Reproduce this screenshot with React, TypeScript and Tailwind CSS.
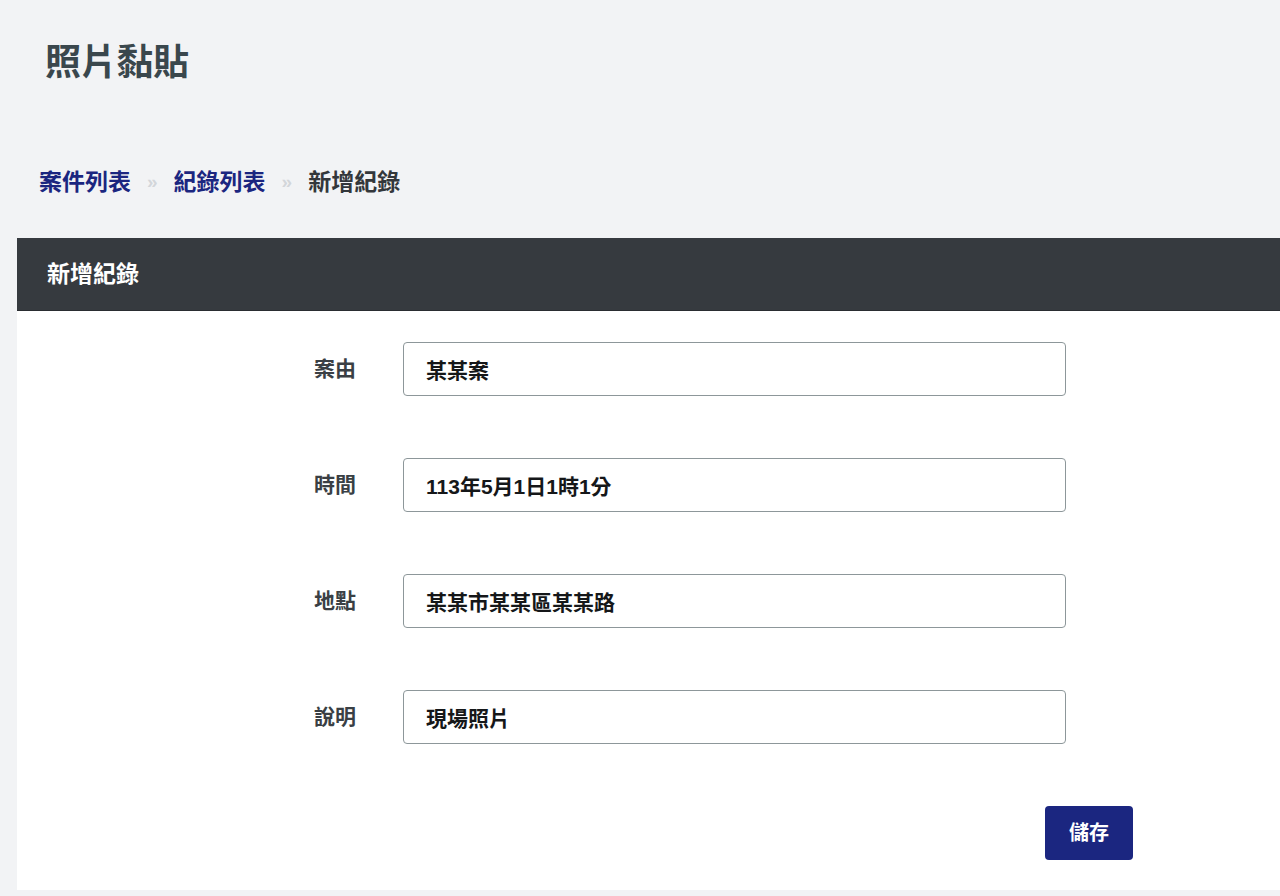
import * as React from "react";

const fields = [
    {label: "案由", value: "某某案"},
    {label: "時間", value: "113年5月1日1時1分"},
    {label: "地點", value: "某某市某某區某某路"},
    {label: "說明", value: "現場照片"},
];

function Breadcrumb() {
    return (
        <nav className="flex flex-row items-center pl-[39px] h-[40px] text-[23px] font-bold">
            <a className="text-[#1b2680]">案件列表</a>
            <span className="mx-[16px] text-[#d3d6da] text-[19px]">»</span>
            <a className="text-[#1b2680]">紀錄列表</a>
            <span className="mx-[16px] text-[#d3d6da] text-[19px]">»</span>
            <span className="text-[#33373b]">新增紀錄</span>
        </nav>
    )
}

function FormRow({label, value}: {label: string; value: string}) {
    return (
        <div className="flex flex-row items-center">
            <label className="w-[89px] text-[21px] font-bold text-[#3a3f44]">{label}</label>
            <input
                readOnly
                value={value}
                className="w-[663px] h-[54px] rounded-[4px] border border-[#8d979a] bg-white px-[22px] text-[21px] font-bold text-[#151719] outline-none"
            />
        </div>
    )
}

export default function App() {
    return (
        <div
            className="min-h-[896px] w-full overflow-hidden bg-[#f2f3f5] pt-[40px]"
            style={{fontFamily: '"Liberation Sans", "Noto Sans CJK TC", sans-serif'}}
        >
            <h1 className="pl-[45px] h-[46px] text-[36px] leading-[46px] font-bold text-[#3a474d]">照片黏貼</h1>
            <div className="h-[76px]"/>
            <Breadcrumb/>
            <div className="h-[36px]"/>
            <div className="ml-[17px] bg-white">
                <div className="h-[73px] bg-[#363a3f] flex items-center pl-[30px] border-b border-[#2a2d31]">
                    <span className="text-white text-[23px] font-bold">新增紀錄</span>
                </div>
                <form className="ml-[297px] w-[819px] pt-[31px] pb-[30px] flex flex-col gap-[62px]">
                    {fields.map(f => <FormRow key={f.label} label={f.label} value={f.value}/>)}
                    <div className="flex flex-row justify-end">
                        <button
                            type="button"
                            className="w-[88px] h-[54px] rounded-[4px] bg-[#1b2680] text-white text-[20px] font-bold"
                        >
                            儲存
                        </button>
                    </div>
                </form>
            </div>
        </div>
    )
}
